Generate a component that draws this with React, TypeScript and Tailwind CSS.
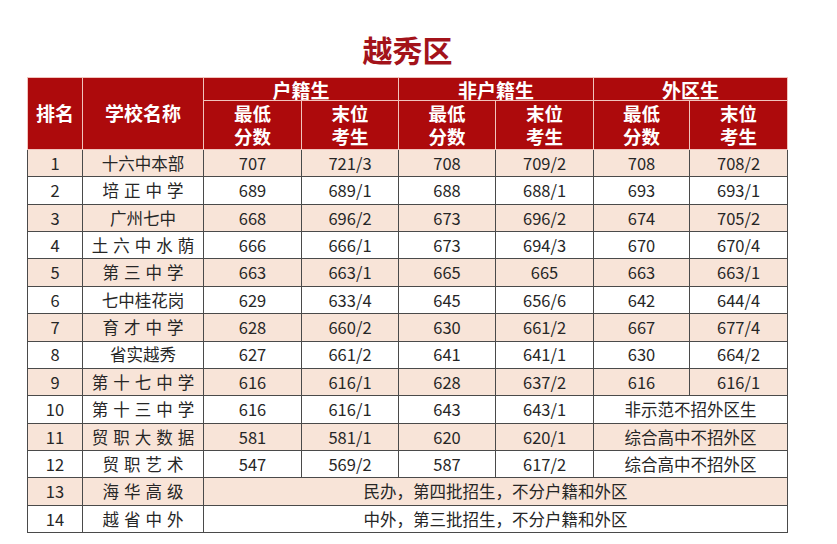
const font = { fontFamily: '"Noto Sans CJK SC", "Noto Sans", sans-serif' };

type Row = {
  rank: number;
  name: string;
  spaced: boolean;
  cells: string[];
  note?: string;
  wideNote?: string;
};

const rows: Row[] = [
  { rank: 1, name: "十六中本部", spaced: false, cells: ["707", "721/3", "708", "709/2", "708", "708/2"] },
  { rank: 2, name: "培正中学", spaced: true, cells: ["689", "689/1", "688", "688/1", "693", "693/1"] },
  { rank: 3, name: "广州七中", spaced: false, cells: ["668", "696/2", "673", "696/2", "674", "705/2"] },
  { rank: 4, name: "土六中水荫", spaced: true, cells: ["666", "666/1", "673", "694/3", "670", "670/4"] },
  { rank: 5, name: "第三中学", spaced: true, cells: ["663", "663/1", "665", "665", "663", "663/1"] },
  { rank: 6, name: "七中桂花岗", spaced: false, cells: ["629", "633/4", "645", "656/6", "642", "644/4"] },
  { rank: 7, name: "育才中学", spaced: true, cells: ["628", "660/2", "630", "661/2", "667", "677/4"] },
  { rank: 8, name: "省实越秀", spaced: false, cells: ["627", "661/2", "641", "641/1", "630", "664/2"] },
  { rank: 9, name: "第十七中学", spaced: true, cells: ["616", "616/1", "628", "637/2", "616", "616/1"] },
  { rank: 10, name: "第十三中学", spaced: true, cells: ["616", "616/1", "643", "643/1"], note: "非示范不招外区生" },
  { rank: 11, name: "贸职大数据", spaced: true, cells: ["581", "581/1", "620", "620/1"], note: "综合高中不招外区" },
  { rank: 12, name: "贸职艺术", spaced: true, cells: ["547", "569/2", "587", "617/2"], note: "综合高中不招外区" },
  { rank: 13, name: "海华高级", spaced: true, cells: [], wideNote: "民办，第四批招生，不分户籍和外区" },
  { rank: 14, name: "越省中外", spaced: true, cells: [], wideNote: "中外，第三批招生，不分户籍和外区" },
];

const th = "border-[1.5px] border-[#f1c4bd] bg-[#ad0a0c] text-white font-bold text-center p-0";
const td = "border border-[#4a4a4a] text-center p-0 h-[27.36px] text-[16.5px] leading-none";

export default function App() {
  return (
    <div className="w-[837px] h-[544px] bg-white overflow-hidden" style={font}>
      <h1 className="pt-[31px] text-center text-[30px] leading-[36px] font-bold text-[#a3131a] pr-[22px]">
        越秀区
      </h1>
      <table className="ml-[27px] mt-[10px] w-[760px] table-fixed border-collapse text-[#262626]">
        <colgroup>
          <col className="w-[55px]" />
          <col className="w-[121px]" />
          <col className="w-[98px]" />
          <col className="w-[97px]" />
          <col className="w-[97px]" />
          <col className="w-[98px]" />
          <col className="w-[96px]" />
          <col className="w-[98px]" />
        </colgroup>
        <thead>
          <tr className="h-[23px]">
            <th rowSpan={2} className={`${th} text-[19px]`}>排名</th>
            <th rowSpan={2} className={`${th} text-[19px]`}>学校名称</th>
            <th colSpan={2} className={`${th} text-[19px] leading-[21px]`}>户籍生</th>
            <th colSpan={2} className={`${th} text-[19px] leading-[21px]`}>非户籍生</th>
            <th colSpan={2} className={`${th} text-[19px] leading-[21px]`}>外区生</th>
          </tr>
          <tr className="h-[49px]">
            {[0, 1, 2].map((g) => (
              <>
                <th key={`a${g}`} className={`${th} text-[18.5px] leading-[23.5px]`}>
                  <div>最低</div>
                  <div>分数</div>
                </th>
                <th key={`b${g}`} className={`${th} text-[18.5px] leading-[23.5px]`}>
                  <div>末位</div>
                  <div>考生</div>
                </th>
              </>
            ))}
          </tr>
        </thead>
        <tbody>
          {rows.map((r) => (
            <tr key={r.rank} className={r.rank % 2 === 1 ? "bg-[#f8e4d8]" : "bg-white"}>
              <td className={td}>{r.rank}</td>
              <td className={td}>
                <span className={r.spaced ? "tracking-[5px] mr-[-5px]" : ""}>{r.name}</span>
              </td>
              {r.wideNote ? (
                <td colSpan={6} className={td}>{r.wideNote}</td>
              ) : (
                <>
                  {r.cells.map((c, i) => (
                    <td key={i} className={td}>{c}</td>
                  ))}
                  {r.note && (
                    <td colSpan={2} className={td}>{r.note}</td>
                  )}
                </>
              )}
            </tr>
          ))}
        </tbody>
      </table>
    </div>
  );
}
